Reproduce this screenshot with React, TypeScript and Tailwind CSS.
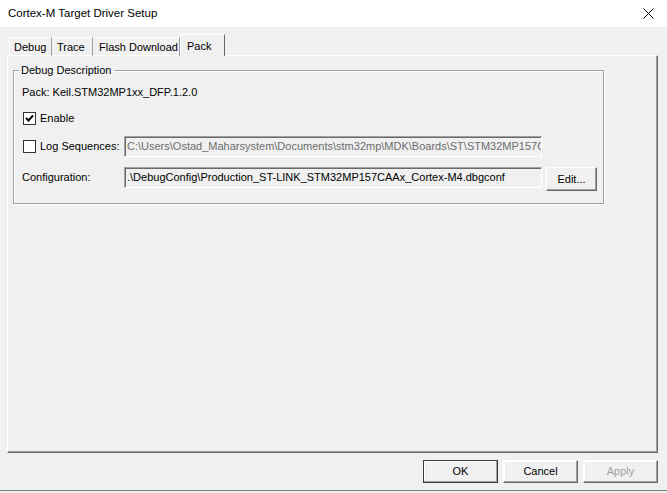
import React from "react";

const font = { fontFamily: '"Liberation Sans", Arial, sans-serif' };

function CheckBox({ checked }: { checked?: boolean }) {
  return (
    <span className="flex h-[13px] w-[13px] shrink-0 items-center justify-center border border-[#333333] bg-white">
      {checked && (
        <svg width="9" height="9" viewBox="0 0 9 9">
          <path d="M1 4 L3.5 6.5 L8 1.5" fill="none" stroke="#000" strokeWidth="2" />
        </svg>
      )}
    </span>
  );
}

function Field({ value, disabled }: { value: string; disabled?: boolean }) {
  return (
    <div
      className={`flex h-[21px] w-[418px] items-center overflow-hidden whitespace-nowrap border border-t-[#a0a0a0] border-l-[#a0a0a0] border-r-white border-b-white bg-[#f0f0f0] pl-[2px] text-[11px] shadow-[inset_1px_1px_0_#696969] ${
        disabled ? "text-[#6d6d6d]" : "text-black"
      }`}
    >
      {value}
    </div>
  );
}

function Button({ label, primary, disabled }: { label: string; primary?: boolean; disabled?: boolean }) {
  return (
    <button
      className={`flex h-[23px] w-[75px] items-center justify-center border text-[11px] shadow-[inset_-1px_-1px_0_#a0a0a0,inset_1px_1px_0_#ffffff] ${
        primary ? "border-[#3c3c3c]" : "border-t-white border-l-white border-r-[#696969] border-b-[#696969]"
      } ${disabled ? "text-[#a0a0a0]" : "text-black"}`}
    >
      {label}
    </button>
  );
}

export default function App() {
  return (
    <div className="flex h-[493px] w-[667px] flex-col bg-[#f0f0f0] text-black" style={font}>
      {/* ── TITLE BAR ── */}
      <div className="flex h-[27px] shrink-0 items-center justify-between bg-white pl-[8px] pr-[13px]">
        <span className="text-[11.5px]">Cortex-M Target Driver Setup</span>
        <svg width="11" height="11" viewBox="0 0 11 11">
          <path d="M0.5 0.5 L10.5 10.5 M10.5 0.5 L0.5 10.5" stroke="#000" strokeWidth="1" />
        </svg>
      </div>

      {/* ── BODY ── */}
      <div className="flex flex-col border-b border-[#7a7a7a] pb-[7px] pl-[7px] pr-[9px] pt-[7px]">
        {/* tabs */}
        <div className="relative z-10 -mb-px flex h-[22px] items-end pl-[2px] text-[11px]">
          <div className="flex h-[19px] w-[43px] items-center border-r border-t border-l border-t-white border-l-white border-r-[#a0a0a0] pl-[4px] pt-[1px]">
            Debug
          </div>
          <div className="flex h-[19px] w-[41px] items-center border-r border-t border-t-white border-r-[#a0a0a0] pl-[5px] pt-[1px]">
            Trace
          </div>
          <div className="flex h-[19px] w-[87px] items-center border-r border-t border-t-white border-r-[#a0a0a0] pl-[6px] pt-[1px]">
            Flash Download
          </div>
          <div className="flex h-[22px] w-[45px] items-start border-r border-t border-l border-t-white border-l-white border-r-[#696969] bg-[#f0f0f0] pl-[6px] pt-[3px]">
            Pack
          </div>
        </div>

        {/* panel */}
        <div className="h-[398px] border border-t-white border-l-white border-r-[#696969] border-b-[#696969] shadow-[inset_-1px_-1px_0_#a0a0a0] pl-[5px] pt-[8px]">
          <fieldset className="h-[140px] w-[591px] border border-[#a0a0a0] pl-[8px] text-[11px] shadow-[inset_1px_1px_0_#ffffff,1px_1px_0_#ffffff]">
            <legend className="-ml-[3px] px-[2px] leading-[13px]">Debug Description</legend>
            <div className="mt-[6px] flex h-[18px] items-center">Pack: Keil.STM32MP1xx_DFP.1.2.0</div>

            <div className="mt-[8px] flex h-[18px] items-center gap-[4px] pl-[1px]">
              <CheckBox checked />
              <span>Enable</span>
            </div>

            <div className="mt-[9px] flex h-[21px] items-center">
              <div className="flex w-[102px] items-center gap-[4px] pl-[1px]">
                <CheckBox />
                <span>Log Sequences:</span>
              </div>
              <Field disabled value="C:\Users\Ostad_Maharsystem\Documents\stm32mp\MDK\Boards\ST\STM32MP157C" />
            </div>

            <div className="mt-[10px] flex h-[24px] items-start">
              <span className="flex h-[21px] w-[102px] items-center">Configuration:</span>
              <Field value=".\DebugConfig\Production_ST-LINK_STM32MP157CAAx_Cortex-M4.dbgconf" />
              <button className="ml-[4px] flex h-[24px] w-[51px] items-center justify-center border border-t-white border-l-white border-r-[#696969] border-b-[#696969] shadow-[inset_-1px_-1px_0_#a0a0a0]">
                Edit...
              </button>
            </div>
          </fieldset>
        </div>

        {/* dialog buttons */}
        <div className="mt-[7px] flex justify-end gap-[5px]">
          <Button label="OK" primary />
          <Button label="Cancel" />
          <Button label="Apply" disabled />
        </div>
      </div>
    </div>
  );
}
